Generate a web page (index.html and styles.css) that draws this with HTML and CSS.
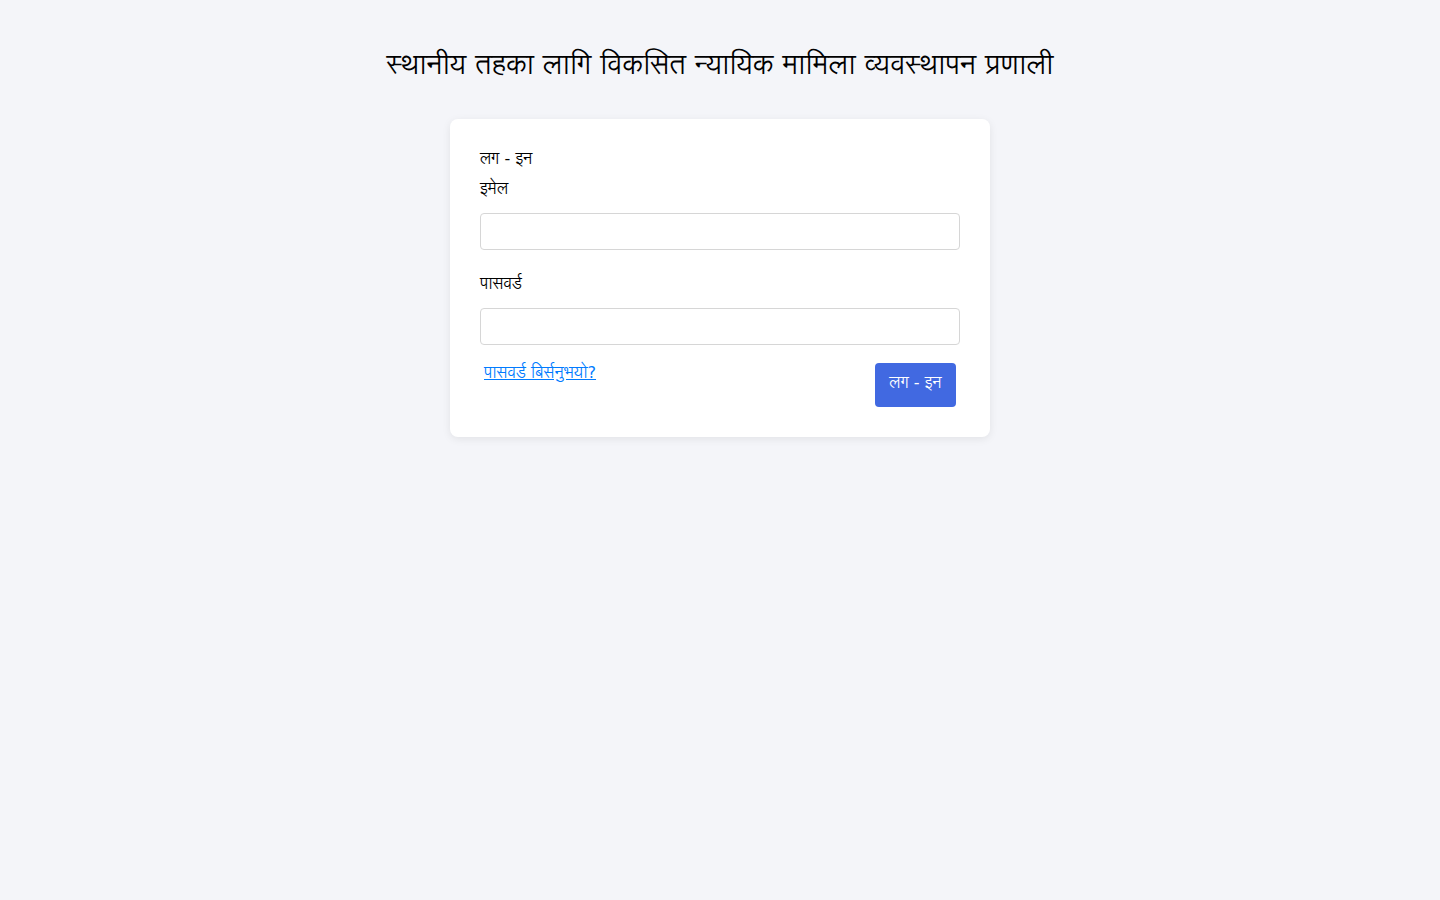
FILE: index.html
```html
<!DOCTYPE html>
<html lang="ne">
<head>
<meta charset="utf-8">
<title>लग - इन</title>
<link rel="stylesheet" href="styles.css">
</head>
<body>
<main class="page">
  <h1 class="title">स्थानीय तहका लागि विकसित न्यायिक मामिला व्यवस्थापन प्रणाली</h1>
  <form class="card">
    <div class="card-title">लग - इन</div>
    <label class="label" for="email">इमेल</label>
    <input class="input" id="email" type="email">
    <label class="label label-gap" for="password">पासवर्ड</label>
    <input class="input" id="password" type="password">
    <div class="actions">
      <a class="forgot" href="#">पासवर्ड बिर्सनुभयो?</a>
      <button class="btn" type="button">लग - इन</button>
    </div>
  </form>
</main>
</body>
</html>
```
FILE: styles.css
```css
* { box-sizing: border-box; }
html, body { margin: 0; }
body {
  background: #f4f5f9;
  font-family: "DejaVu Sans", "Lohit Devanagari", sans-serif;
  color: #000;
  min-height: 900px;
}
.page {
  display: flex;
  flex-direction: column;
  align-items: center;
  padding-top: 45px;
}
.title {
  margin: 0 0 34px;
  font-size: 28px;
  font-weight: 400;
  line-height: 40px;
}
.card {
  width: 540px;
  background: #fff;
  border-radius: 8px;
  box-shadow: 0 2px 8px rgba(0,0,0,0.08);
  padding: 28px 30px 30px;
  display: flex;
  flex-direction: column;
}
.card-title {
  font-size: 16px;
  line-height: 24px;
  margin-bottom: 6px;
}
.label {
  font-size: 16px;
  line-height: 24px;
  margin-bottom: 12px;
}
.label-gap { margin-top: 22px; }
.input {
  height: 37px;
  border: 1px solid #d6d6d6;
  border-radius: 4px;
  background: #fff;
  width: 100%;
}
.actions {
  display: flex;
  justify-content: space-between;
  align-items: flex-start;
  padding: 18px 4px 0;
}
.forgot {
  color: #007bff;
  font-size: 16px;
  line-height: 24px;
  margin-top: -2px;
  text-decoration: underline;
}
.btn {
  width: 81px;
  height: 44px;
  background: #4169e1;
  color: #fff;
  border: 0;
  border-radius: 4px;
  font-family: inherit;
  font-size: 16px;
  line-height: 24px;
  padding: 8px 0 0;
  display: flex;
  justify-content: center;
  align-items: flex-start;
}
```
